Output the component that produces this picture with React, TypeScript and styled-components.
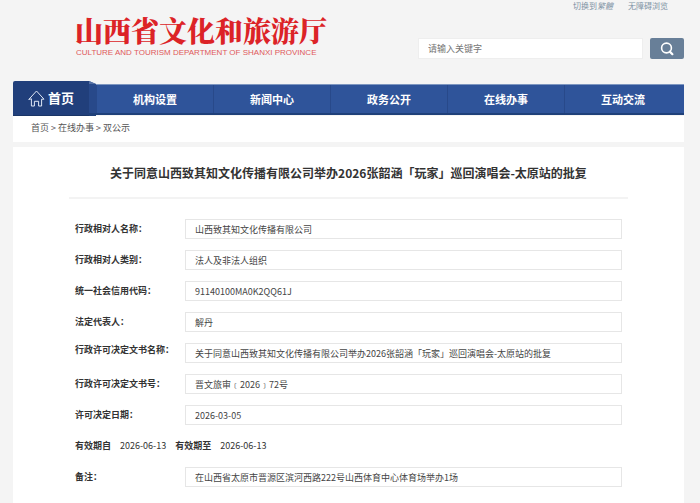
import React from "react";
import styled, { createGlobalStyle } from "styled-components";

const GlobalStyle = createGlobalStyle`
  *, *::before, *::after { box-sizing: border-box; }
  body {
    margin: 0;
    background: #f4f4f4;
    color: #333;
    font-family: "Noto Sans CJK SC", "Noto Sans", sans-serif;
    font-size: 9px;
    line-height: 14px;
  }
  a { color: inherit; text-decoration: none; }
  input, button { font: inherit; color: inherit; }
`;

const Page = styled.div`
  padding: 0 16px 0 13px;
`;

const Header = styled.header`
  display: flex;
  justify-content: space-between;
  height: 81px;
  padding-left: 62px;
`;

const Logo = styled.a`
  display: flex;
  flex-direction: column;
  padding-top: 12px;
  color: #dc2327;
  white-space: nowrap;
`;

const LogoName = styled.span`
  font-family: "Noto Serif CJK SC", "Noto Sans CJK SC", serif;
  font-size: 28px;
  font-weight: 900;
  line-height: 36px;
`;

const LogoSub = styled.span`
  padding-left: 1px;
  color: #e0595b;
  font-family: "Liberation Sans", Arial, sans-serif;
  font-size: 8px;
  line-height: 9px;
`;

const Tools = styled.div`
  display: flex;
  flex-direction: column;
  gap: 26px;
  width: 266px;
`;

const QuickLinks = styled.div`
  display: flex;
  justify-content: flex-end;
  gap: 15px;
  padding-right: 16px;
  color: #7f93a4;
  font-size: 8px;
  line-height: 12px;
`;

const SearchForm = styled.form`
  display: flex;
  gap: 7px;
`;

const SearchInput = styled.input`
  flex: 1;
  min-width: 0;
  height: 21px;
  padding: 0 9px;
  border: 1px solid #eee;
  background: #fff;
  outline: none;
  &::placeholder { color: #757575; opacity: 1; }
`;

const SearchButton = styled.button`
  display: flex;
  align-items: center;
  justify-content: center;
  width: 34px;
  height: 21px;
  padding: 0;
  border: 0;
  border-radius: 2px;
  background: #687f98;
  color: #fff;
`;

const Nav = styled.nav`
  display: flex;
  align-items: flex-end;
`;

const HomeTab = styled.a`
  display: flex;
  align-items: center;
  gap: 3px;
  width: 76px;
  height: 35px;
  padding-left: 15px;
  border-bottom: 1px solid #1a3566;
  border-radius: 2px 0 0 0;
  background: #213f7b;
  color: #fff;
  font-size: 13px;
  font-weight: 700;
`;

const TabFold = styled.svg`
  width: 7px;
  height: 35px;
`;

const NavList = styled.div`
  display: flex;
  flex: 1;
  height: 31px;
  margin-bottom: 1px;
  padding-right: 3px;
  border-top: 1px solid #7d96c0;
  border-bottom: 2px solid #1f4079;
  background: #2f549a;
`;

const NavItem = styled.a`
  display: flex;
  flex: 1;
  align-items: center;
  justify-content: center;
  border-left: 1px solid #28498a;
  color: #fff;
  font-size: 11px;
  font-weight: 700;
`;

const Breadcrumb = styled.nav`
  height: 26px;
  padding: 5px 18px;
  background: #fff;
  color: #555;
`;

const Article = styled.main`
  min-height: 356px;
  margin-top: 5px;
  padding: 0 56px 18px;
  background: #fff;
`;

const Title = styled.h1`
  margin: 0;
  padding: 16px 0 14px;
  border-bottom: 2px solid #f3f3f3;
  font-size: 12px;
  line-height: 20px;
  text-align: center;
`;

const Fields = styled.div`
  display: flex;
  flex-direction: column;
  gap: 11px;
  padding: 20px 6px 0;
`;

const FieldRow = styled.div<{ $raised?: boolean }>`
  display: flex;
  align-items: ${(p) => (p.$raised ? "flex-start" : "center")};
  height: 20px;
`;

const FieldLabel = styled.label`
  width: 110px;
  font-weight: 700;
  white-space: nowrap;
`;

const FieldValue = styled.input`
  flex: 1;
  min-width: 0;
  height: 20px;
  padding: 0 9px;
  border: 1px solid #e6e6e6;
  border-radius: 0;
  background: #fff;
  color: #444;
  outline: none;
`;

const Validity = styled.div`
  display: flex;
  align-items: center;
  gap: 9px;
  height: 20px;
`;

const navItems = ["机构设置", "新闻中心", "政务公开", "在线办事", "互动交流"];

const company = "山西致其知文化传播有限公司";
const title = `关于同意${company}举办2026张韶涵「玩家」巡回演唱会-太原站的批复`;

type Field = { id: string; label: string; value: string; raised?: boolean };

const fields: Field[] = [
  { id: "name", label: "行政相对人名称：", value: company },
  { id: "type", label: "行政相对人类别：", value: "法人及非法人组织" },
  { id: "code", label: "统一社会信用代码：", value: "91140100MA0K2QQ61J" },
  { id: "legal", label: "法定代表人：", value: "解丹" },
  { id: "doc", label: "行政许可决定文书名称：", value: title, raised: true },
  { id: "docno", label: "行政许可决定文书号：", value: "晋文旅审﹝2026﹞72号" },
  { id: "date", label: "许可决定日期：", value: "2026-03-05" },
];

const remark: Field = {
  id: "remark",
  label: "备注：",
  value: "在山西省太原市晋源区滨河西路222号山西体育中心体育场举办1场",
};

function FieldLine({ id, label, value, raised }: Field) {
  return (
    <FieldRow $raised={raised}>
      <FieldLabel htmlFor={id}>{label}</FieldLabel>
      <FieldValue id={id} value={value} readOnly />
    </FieldRow>
  );
}

function HomeIcon() {
  return (
    <svg width="17" height="17" viewBox="0 0 17 17" fill="none" stroke="#dfe7f5" strokeLinejoin="round" strokeLinecap="round" aria-hidden="true">
      <path d="M1 9.200 8.500 1l7.500 8.200h-2.400V16H10.600v-4.700H6.400V16H3.400V9.200Z" />
    </svg>
  );
}

function SearchIcon() {
  return (
    <svg width="14" height="14" viewBox="0 0 14 14" fill="none" stroke="currentColor" aria-hidden="true">
      <circle cx="6.500" cy="6" r="4.900" strokeWidth="1.600" />
      <path d="m9.800 9.600 2.600 2.600" strokeWidth="2.200" strokeLinecap="round" />
    </svg>
  );
}

export default function App() {
  return (
    <>
      <GlobalStyle />
      <Page>
        <Header>
          <Logo href="#">
            <LogoName>山西省文化和旅游厅</LogoName>
            <LogoSub>CULTURE AND TOURISM DEPARTMENT OF SHANXI PROVINCE</LogoSub>
          </Logo>
          <Tools>
            <QuickLinks>
              <a href="#">
                切换到<em>繁體</em>
              </a>
              <a href="#">无障碍浏览</a>
            </QuickLinks>
            <SearchForm onSubmit={(e) => e.preventDefault()}>
              <SearchInput type="text" placeholder="请输入关键字" aria-label="请输入关键字" />
              <SearchButton type="submit" aria-label="搜索">
                <SearchIcon />
              </SearchButton>
            </SearchForm>
          </Tools>
        </Header>
        <Nav>
          <HomeTab href="#">
            <HomeIcon />
            首页
          </HomeTab>
          <TabFold viewBox="0 0 7 35" aria-hidden="true">
            <path d="M0 0 7 3V35H0Z" fill="#28498a" />
            <path d="M0 0 7 3H0Z" fill="#5470a3" />
            <path d="M0 32H7V35H0Z" fill="#1f4079" />
          </TabFold>
          <NavList>
            {navItems.map((item) => (
              <NavItem href="#" key={item}>
                {item}
              </NavItem>
            ))}
          </NavList>
        </Nav>
        <Breadcrumb>
          <a href="#">首页</a> &gt; <a href="#">在线办事</a> &gt; <a href="#">双公示</a>
        </Breadcrumb>
        <Article>
          <Title>{title}</Title>
          <Fields>
            {fields.map((f) => (
              <FieldLine key={f.id} {...f} />
            ))}
            <Validity>
              <strong>有效期自</strong>
              <span>2026-06-13</span>
              <strong>有效期至</strong>
              <span>2026-06-13</span>
            </Validity>
            <FieldLine {...remark} />
          </Fields>
        </Article>
      </Page>
    </>
  );
}
